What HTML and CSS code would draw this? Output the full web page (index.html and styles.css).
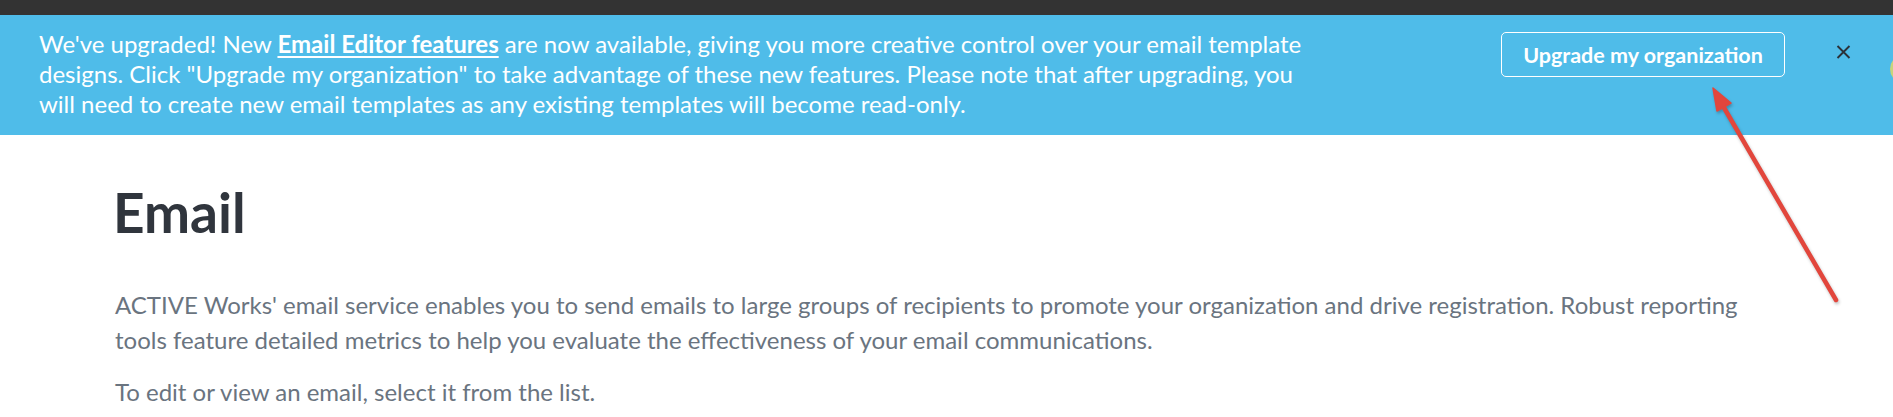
FILE: index.html
```html
<!DOCTYPE html>
<html lang="en">
<head>
<meta charset="utf-8">
<title>Email</title>
<link rel="stylesheet" href="styles.css">
</head>
<body>
<div class="topbar"></div>
<div class="banner">
  <p class="banner-text">We've upgraded! New <a class="banner-link" href="#">Email Editor features</a> are now available, giving you more creative control over your email template designs. Click "Upgrade my organization" to take advantage of these new features. Please note that after upgrading, you will need to create new email templates as any existing templates will become read-only.</p>
  <button class="upgrade-btn" type="button">Upgrade my organization</button>
  <button class="close-btn" type="button" aria-label="Close">
    <svg width="15" height="14" viewBox="0 0 15 14"><path d="M1.5 1 L13.5 13 M13.5 1 L1.5 13" stroke="#2b3138" stroke-width="1.9" fill="none"/></svg>
  </button>
  <span class="peek-dot"></span>
</div>
<main class="content">
  <h1 class="title">Email</h1>
  <p class="lead">ACTIVE Works' email service enables you to send emails to large groups of recipients to promote your organization and drive registration. Robust reporting tools feature detailed metrics to help you evaluate the effectiveness of your email communications.</p>
  <p class="lead second">To edit or view an email, select it from the list.</p>
</main>
<svg class="annotation" width="1893" height="417" viewBox="0 0 1893 417">
  <g fill="#e2463c" stroke="#e2463c">
    <line x1="1836" y1="300" x2="1723" y2="106" stroke-width="4.5" stroke-linecap="round"/>
    <polygon points="1713,88 1731,103 1717,111" stroke-width="1.5" stroke-linejoin="round"/>
  </g>
</svg>
</body>
</html>
```
FILE: styles.css
```css
html, body {
  margin: 0;
  padding: 0;
  background: #ffffff;
}
body {
  font-family: "Lato", "Noto Sans", sans-serif;
  overflow: hidden;
  position: relative;
  width: 1893px;
  height: 417px;
}
.topbar {
  height: 15px;
  background: #333333;
}
.banner {
  position: relative;
  display: flex;
  align-items: flex-start;
  background: #4fbce9;
  height: 120px;
  box-sizing: border-box;
  padding: 14px 0 0 39px;
  color: #ffffff;
  overflow: hidden;
}
.banner-text {
  flex: 0 0 1292px;
  margin: 0;
  font-size: 24px;
  line-height: 30px;
}
.banner-link {
  color: #ffffff;
  font-weight: 700;
  text-decoration: underline;
  text-underline-offset: 3px;
  text-decoration-thickness: 2px;
}
.upgrade-btn {
  flex: 0 0 284px;
  height: 45px;
  margin: 3px 0 0 170px;
  padding: 0;
  border: 1px solid #ffffff;
  border-radius: 5px;
  background: transparent;
  color: #ffffff;
  font-family: "Lato", "Noto Sans", sans-serif;
  font-weight: 700;
  font-size: 21.5px;
  cursor: pointer;
}
.close-btn {
  flex: 0 0 auto;
  margin: 16px 0 0 51px;
  padding: 0;
  border: 0;
  background: transparent;
  width: 15px;
  height: 14px;
  line-height: 0;
}
.peek-dot {
  position: absolute;
  left: 1890px;
  top: 40px;
  width: 28px;
  height: 28px;
  border-radius: 50%;
  background: #c8d47c;
}
.content {
  padding: 50px 0 0 115px;
}
.title {
  margin: 0 0 47px -2px;
  font-size: 55px;
  line-height: 55px;
  font-weight: 700;
  color: #30353d;
}
.lead {
  width: 1645px;
  margin: 0;
  font-size: 24px;
  line-height: 35px;
  color: #6a7480;
}
.lead.second {
  margin-top: 17px;
}
.annotation {
  position: absolute;
  left: 0;
  top: 0;
  pointer-events: none;
  filter: drop-shadow(1px 2px 1.5px rgba(0,0,0,0.25));
}
```
